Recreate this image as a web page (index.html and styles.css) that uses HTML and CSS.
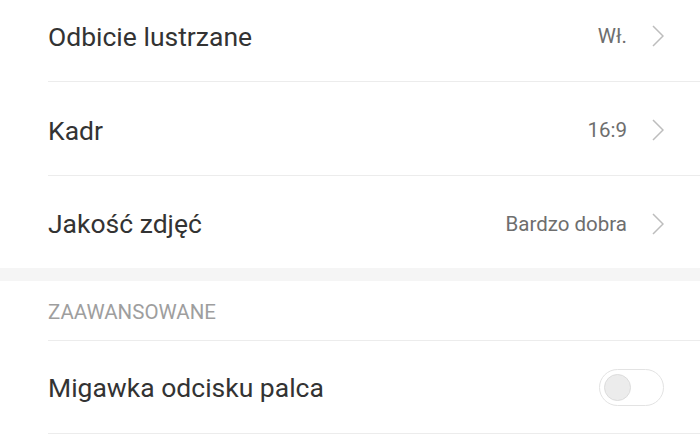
FILE: index.html
```html
<!DOCTYPE html>
<html lang="pl">
<head>
<meta charset="utf-8">
<link rel="stylesheet" href="styles.css">
</head>
<body>
<div class="screen">
  <div class="group">
    <div class="row first">
      <span class="title">Odbicie lustrzane</span>
      <span class="value">Wł.</span>
      <svg class="chev" viewBox="0 0 12 22" width="12" height="22"><path d="M1 1 L11 11 L1 21" fill="none" stroke="#bdbdbd" stroke-width="1.5"/></svg>
    </div>
    <div class="row">
      <span class="title">Kadr</span>
      <span class="value">16:9</span>
      <svg class="chev" viewBox="0 0 12 22" width="12" height="22"><path d="M1 1 L11 11 L1 21" fill="none" stroke="#bdbdbd" stroke-width="1.5"/></svg>
    </div>
    <div class="row last">
      <span class="title">Jakość zdjęć</span>
      <span class="value">Bardzo dobra</span>
      <svg class="chev" viewBox="0 0 12 22" width="12" height="22"><path d="M1 1 L11 11 L1 21" fill="none" stroke="#bdbdbd" stroke-width="1.5"/></svg>
    </div>
  </div>
  <div class="gap"></div>
  <div class="group">
    <div class="header">ZAAWANSOWANE</div>
    <div class="row toggle-row">
      <span class="title">Migawka odcisku palca</span>
      <span class="switch"><span class="knob"></span></span>
    </div>
  </div>
</div>
</body>
</html>
```
FILE: styles.css
```css
html, body {
  margin: 0;
  padding: 0;
  background: #ffffff;
}
.screen {
  width: 700px;
  height: 441px;
  overflow: hidden;
  font-family: Roboto, "Noto Sans", sans-serif;
}
.group {
  padding-left: 48px;
}
.row {
  box-sizing: border-box;
  display: flex;
  align-items: center;
  height: 94px;
  border-bottom: 1px solid #ececec;
  padding-right: 36px;
  padding-top: 3px;
}
.row.first {
  margin-top: -12px;
}
.row.last {
  border-bottom: none;
  height: 92px;
}
.title {
  flex: 1;
  font-size: 26.5px;
  color: #333333;
}
.value {
  font-size: 20.5px;
  color: #6e6e6e;
  margin-right: 25px;
}
.chev {
  display: block;
}
.gap {
  height: 13px;
  background: #f5f5f5;
}
.header {
  box-sizing: border-box;
  height: 60px;
  display: flex;
  align-items: center;
  padding-top: 2px;
  font-size: 20.5px;
  color: #9e9e9e;
  border-bottom: 1px solid #ececec;
}
.toggle-row {
  padding-right: 36px;
  padding-top: 0;
  height: 93px;
}
.switch {
  box-sizing: border-box;
  width: 65px;
  height: 37px;
  border: 1.5px solid #e3e3e3;
  border-radius: 19px;
  display: flex;
  align-items: center;
  padding-left: 3.5px;
}
.knob {
  box-sizing: border-box;
  width: 27px;
  height: 27px;
  border-radius: 50%;
  background: #ececec;
  border: 1px solid #dcdcdc;
}
```
